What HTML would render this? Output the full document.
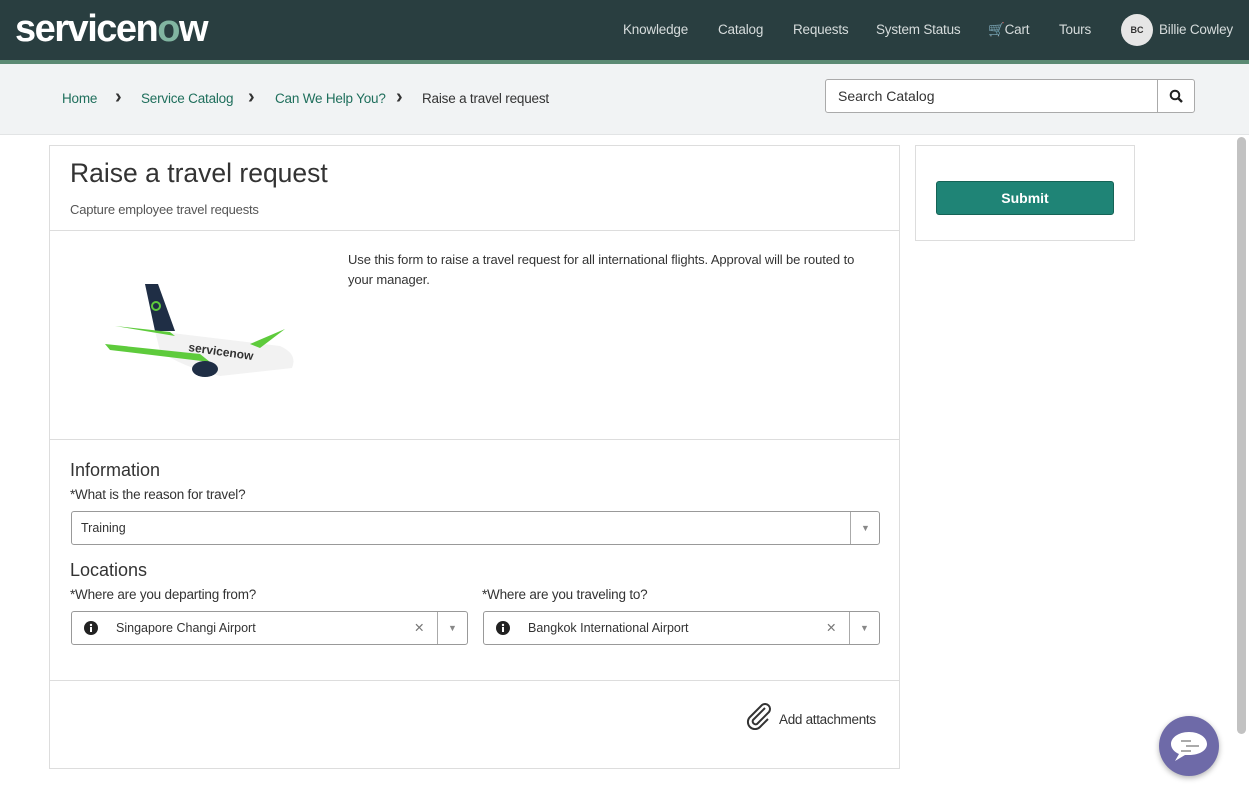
<!DOCTYPE html>
<html><head><meta charset="utf-8"><style>
*{box-sizing:border-box;margin:0;padding:0}
body{width:1249px;height:791px;overflow:hidden;background:#fff;font-family:"Liberation Sans",sans-serif;color:#2e2e2e;position:relative}
.hdr{position:absolute;left:0;top:0;width:1249px;height:64px;background:#293e40;border-bottom:4px solid #5b8a73}
.logo{position:absolute;left:15px;top:8px;color:#fff;font-size:38px;font-weight:bold;letter-spacing:-1.5px}
.logo span{color:#81b5a1}
.nav{position:absolute;top:22px;font-size:13.5px;color:#d6dcdc;letter-spacing:-0.2px}
.av{position:absolute;left:1121px;top:14px;width:32px;height:32px;border-radius:50%;background:#e6e6e6;color:#333;font-size:9px;font-weight:bold;text-align:center;line-height:32px}
.bc{position:absolute;left:0;top:64px;width:1249px;height:71px;background:#f1f3f4;border-bottom:1px solid #e2e4e5}
.bc a{position:absolute;top:27px;font-size:13.5px;color:#1f6f5c;letter-spacing:-0.2px}
.bc b{position:absolute;top:22px;font-size:20px;color:#333;font-weight:bold}
.search{position:absolute;left:825px;top:15px;width:370px;height:34px;background:#fff;border:1px solid #aaa;border-radius:3px}
.search span{position:absolute;left:12px;top:8px;font-size:14px;color:#333}
.search i{position:absolute;left:331px;top:0;width:1px;height:32px;background:#aaa}
.card{position:absolute;border:1px solid #ddd;background:#fff}
.in{position:absolute;border:1px solid #999;border-radius:3px;height:34px;font-size:12.5px;color:#333}
.lbl{position:absolute;font-size:13.5px;color:#333;letter-spacing:-0.2px}
.dd{position:absolute;top:0;width:30px;height:32px;border-left:1px solid #aaa;color:#888;font-size:9px;text-align:center;line-height:32px}
.sb{position:absolute;left:1237px;top:137px;width:9px;height:597px;background:#c2c2c2;border-radius:5px}
</style></head><body>
<div class="hdr">
<div class="logo">servicen<span>o</span>w</div>
<div class="nav" style="left:623px">Knowledge</div>
<div class="nav" style="left:718px">Catalog</div>
<div class="nav" style="left:793px">Requests</div>
<div class="nav" style="left:876px">System Status</div>
<div class="nav" style="left:988px">&#128722;Cart</div>
<div class="nav" style="left:1059px">Tours</div>
<div class="av">BC</div>
<div class="nav" style="left:1159px">Billie Cowley</div>
</div>
<div class="bc">
<a style="left:62px">Home</a><b style="left:115px">›</b>
<a style="left:141px">Service Catalog</a><b style="left:248px">›</b>
<a style="left:275px">Can We Help You?</a><b style="left:396px">›</b>
<a style="left:422px;color:#333">Raise a travel request</a>
<div class="search"><span>Search Catalog</span><i></i>
<svg style="position:absolute;left:343px;top:9px" width="14" height="14" viewBox="0 0 14 14"><circle cx="6" cy="6" r="4.3" fill="none" stroke="#222" stroke-width="2"/><path d="M9 9l4 4" stroke="#222" stroke-width="2.4"/></svg></div>
</div>
<div class="card" style="left:49px;top:145px;width:851px;height:624px">
<div style="position:absolute;left:20px;top:12px;font-size:26.5px;color:#333">Raise a travel request</div>
<div style="position:absolute;left:20px;top:56px;font-size:13px;color:#555;letter-spacing:-0.2px">Capture employee travel requests</div>
<div style="position:absolute;left:0;top:84px;width:849px;height:1px;background:#ddd"></div>
<svg style="position:absolute;left:50px;top:130px" width="200" height="115" viewBox="0 0 200 115">
<path d="M45 8 L58 8 L75 55 L55 55Z" fill="#1f2e45"/><circle cx="56" cy="30" r="4" fill="none" stroke="#5ecb3c" stroke-width="2"/>
<path d="M55 55 L180 70 Q198 78 192 92 L120 100 Q80 90 60 75Z" fill="#f2f2f2"/>
<path d="M5 68 L100 78 L110 86 L10 74Z" fill="#5ecb3c"/><path d="M15 50 L70 56 L75 60Z" fill="#5ecb3c"/>
<path d="M150 68 L185 53 L160 72Z" fill="#5ecb3c"/>
<ellipse cx="105" cy="93" rx="13" ry="8" fill="#1f2e45"/>
<text x="88" y="75" font-size="12" font-weight="bold" fill="#333" font-family="Liberation Sans" transform="rotate(8 88 75)">servicenow</text></svg>
<div style="position:absolute;left:298px;top:104px;width:515px;font-size:13px;line-height:20px;color:#333;letter-spacing:-0.1px">Use this form to raise a travel request for all international flights. Approval will be routed to your manager.</div>
<div style="position:absolute;left:0;top:293px;width:849px;height:1px;background:#ddd"></div>
<div style="position:absolute;left:20px;top:314px;font-size:18px;color:#333">Information</div>
<div class="lbl" style="left:20px;top:341px">*What is the reason for travel?</div>
<div class="in" style="left:21px;top:365px;width:809px"><span style="position:absolute;left:9px;top:9px">Training</span><div class="dd" style="left:778px">▼</div></div>
<div style="position:absolute;left:20px;top:414px;font-size:18px;color:#333">Locations</div>
<div class="lbl" style="left:20px;top:441px">*Where are you departing from?</div>
<div class="lbl" style="left:432px;top:441px">*Where are you traveling to?</div>
<div class="in" style="left:21px;top:465px;width:397px"><svg style="position:absolute;left:12px;top:9px" width="14" height="14" viewBox="0 0 14 14"><circle cx="7" cy="7" r="7" fill="#222"/><rect x="6" y="6" width="2" height="5" fill="#fff"/><circle cx="7" cy="4" r="1.2" fill="#fff"/></svg><span style="position:absolute;left:44px;top:9px">Singapore Changi Airport</span><span style="position:absolute;left:342px;top:8px;color:#777">✕</span><div class="dd" style="left:365px">▼</div></div>
<div class="in" style="left:433px;top:465px;width:397px"><svg style="position:absolute;left:12px;top:9px" width="14" height="14" viewBox="0 0 14 14"><circle cx="7" cy="7" r="7" fill="#222"/><rect x="6" y="6" width="2" height="5" fill="#fff"/><circle cx="7" cy="4" r="1.2" fill="#fff"/></svg><span style="position:absolute;left:44px;top:9px">Bangkok International Airport</span><span style="position:absolute;left:342px;top:8px;color:#777">✕</span><div class="dd" style="left:365px">▼</div></div>
<div style="position:absolute;left:0;top:534px;width:849px;height:1px;background:#ddd"></div>
<svg style="position:absolute;left:695px;top:556px" width="28" height="28" viewBox="0 0 28 28"><path d="M20 6 L8 18 a3 3 0 0 0 4 4 L24 10 a5 5 0 0 0 -7 -7 L5 15 a7 7 0 0 0 10 10 L23 17" fill="none" stroke="#333" stroke-width="2"/></svg>
<div style="position:absolute;left:729px;top:566px;font-size:13.5px;color:#333;letter-spacing:-0.3px">Add attachments</div>
</div>
<div class="card" style="left:915px;top:145px;width:220px;height:96px">
<div style="position:absolute;left:20px;top:35px;width:178px;height:34px;background:#1f8476;border:1px solid #156356;border-radius:3px;color:#fff;font-size:14px;font-weight:bold;text-align:center;line-height:32px">Submit</div></div>
<div class="sb"></div>
<div style="position:absolute;left:1159px;top:716px;width:60px;height:60px;border-radius:50%;background:#6e6aa8;box-shadow:0 2px 6px rgba(0,0,0,.3)">
<svg width="60" height="60" viewBox="0 0 60 60"><path d="M30 16c-11 0-18 6-18 12 0 4 3 8 8 10l-4 7 10-6c1 0 3 0 4 0 11 0 18-5 18-11s-7-12-18-12z" fill="#fff"/><path d="M22 25h10M27 30h13M22 35h10" stroke="#aaa" stroke-width="2"/></svg></div>
</body></html>
